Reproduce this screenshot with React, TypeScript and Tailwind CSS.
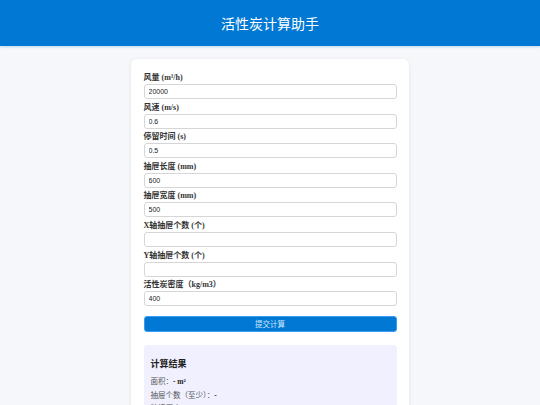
import React from "react";

const fields = [
  { label: "风量 (m³/h)", value: "20000" },
  { label: "风速 (m/s)", value: "0.6" },
  { label: "停留时间 (s)", value: "0.5" },
  { label: "抽屉长度 (mm)", value: "600" },
  { label: "抽屉宽度 (mm)", value: "500" },
  { label: "X轴抽屉个数 (个)", value: "" },
  { label: "Y轴抽屉个数 (个)", value: "" },
  { label: "活性炭密度（kg/m3）", value: "400" },
];

export default function App() {
  return (
    <div className="min-h-screen bg-[#f5f7fa] font-['Liberation_Serif','Noto_Sans_CJK_SC',serif]">
      <header className="h-[46px] bg-[#0078d4] shadow-[0_1px_2px_rgba(0,120,212,0.25)] flex items-center justify-center">
        <h1 className="text-white text-[14px] font-['Noto_Sans_CJK_SC',sans-serif] leading-none">活性炭计算助手</h1>
      </header>

      <main className="flex justify-center pt-[13px]">
        <div className="w-[278px] bg-white rounded-[6px] shadow-[0_1px_4px_rgba(0,0,0,0.08)] px-[12.5px] pt-[14.5px] pb-6">
          {fields.map((f) => (
            <div key={f.label} className="h-[29.6px]">
              <label className="flex items-center h-[9px] mb-[1.5px] text-[8px] font-bold text-[#333] whitespace-nowrap">{f.label}</label>
              <input
                defaultValue={f.value}
                className="block w-full h-[15px] border border-[#d6d6d6] rounded-[3px] px-[4px] text-[7px] text-[#222] font-['Liberation_Sans',sans-serif] outline-none"
              />
            </div>
          ))}

          <button className="mt-[1.7px] w-full h-[16px] rounded-[3px] bg-[#0078d4] border border-[#3a9bf0] text-[#cfe6fb] text-[7.5px] font-['Noto_Sans_CJK_SC',sans-serif] leading-none">
            提交计算
          </button>

          <div className="mt-[11px] bg-[#f0f0ff] rounded-[4px] px-[7px] pt-[13px] pb-4">
            <h2 className="text-[9px] font-bold text-[#222] leading-[12px] font-['Noto_Sans_CJK_SC',sans-serif] mb-[5px]">计算结果</h2>
            <p className="text-[7.5px] text-[#555] leading-[13.5px]">
              面积：<span className="font-bold text-[#222]">- m²</span>
            </p>
            <p className="text-[7.5px] text-[#555] leading-[13.5px]">
              抽屉个数（至少）：<span className="font-bold text-[#222]">-</span>
            </p>
            <p className="text-[7.5px] text-[#555] leading-[13.5px]">
              装填厚度：<span className="font-bold text-[#222]">- mm</span>
            </p>
            <p className="text-[7.5px] text-[#555] leading-[13.5px]">
              活性炭重量：<span className="font-bold text-[#222]">- kg</span>
            </p>
          </div>
        </div>
      </main>
    </div>
  );
}
